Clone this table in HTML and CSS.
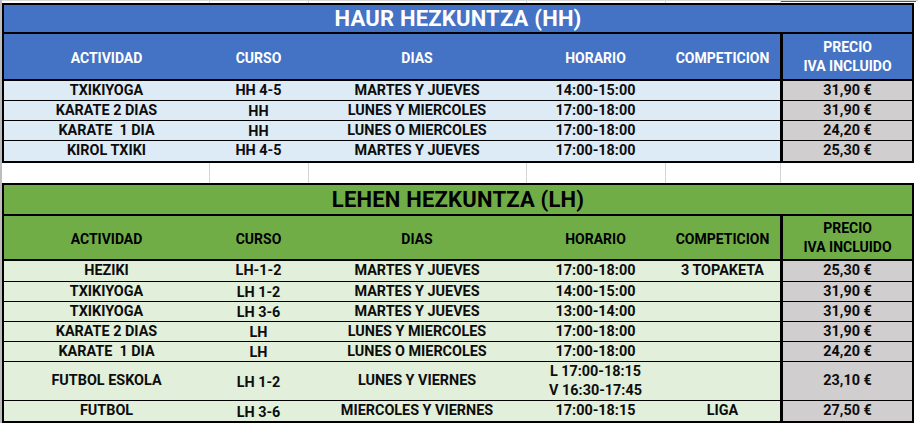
FILE: index.html
```html
<!DOCTYPE html>
<html lang="es">
<head>
<meta charset="utf-8">
<title>Actividades</title>
<link rel="stylesheet" href="styles.css">
</head>
<body>
<div class="sheet">
  <div class="grid-row strip">
    <span class="g1"></span><span class="g2"></span><span class="g3"></span><span class="g4"></span><span class="g5"></span><span class="g6 sel"></span>
  </div>
  <table class="tbl hh">
    <colgroup><col class="w1"><col class="w2"><col class="w3"><col class="w4"><col class="w5"><col class="w6"></colgroup>
    <tr class="title"><th colspan="6">HAUR HEZKUNTZA (HH)</th></tr>
    <tr class="head"><th>ACTIVIDAD</th><th>CURSO</th><th>DIAS</th><th>HORARIO</th><th>COMPETICION</th><th class="price">PRECIO<br>IVA INCLUIDO</th></tr>
    <tr><td>TXIKIYOGA</td><td>HH 4-5</td><td>MARTES Y JUEVES</td><td>14:00-15:00</td><td></td><td class="price">31,90 €</td></tr>
    <tr><td>KARATE 2 DIAS</td><td class="lo">HH</td><td>LUNES Y MIERCOLES</td><td>17:00-18:00</td><td></td><td class="price">31,90 €</td></tr>
    <tr><td>KARATE&nbsp; 1 DIA</td><td class="lo">HH</td><td>LUNES O MIERCOLES</td><td>17:00-18:00</td><td></td><td class="price">24,20 €</td></tr>
    <tr><td>KIROL TXIKI</td><td>HH 4-5</td><td>MARTES Y JUEVES</td><td>17:00-18:00</td><td></td><td class="price">25,30 €</td></tr>
  </table>
  <div class="grid-row gap">
    <span class="g1"></span><span class="g2"></span><span class="g3"></span><span class="g4"></span><span class="g5"></span><span class="g6"></span>
  </div>
  <table class="tbl lh">
    <colgroup><col class="w1"><col class="w2"><col class="w3"><col class="w4"><col class="w5"><col class="w6"></colgroup>
    <tr class="title"><th colspan="6">LEHEN HEZKUNTZA (LH)</th></tr>
    <tr class="head"><th>ACTIVIDAD</th><th>CURSO</th><th>DIAS</th><th>HORARIO</th><th>COMPETICION</th><th class="price">PRECIO<br>IVA INCLUIDO</th></tr>
    <tr class="first"><td>HEZIKI</td><td>LH-1-2</td><td>MARTES Y JUEVES</td><td>17:00-18:00</td><td>3 TOPAKETA</td><td class="price">25,30 €</td></tr>
    <tr><td>TXIKIYOGA</td><td class="lo">LH 1-2</td><td>MARTES Y JUEVES</td><td>14:00-15:00</td><td></td><td class="price">31,90 €</td></tr>
    <tr><td>TXIKIYOGA</td><td class="lo">LH 3-6</td><td>MARTES Y JUEVES</td><td>13:00-14:00</td><td></td><td class="price">31,90 €</td></tr>
    <tr><td>KARATE 2 DIAS</td><td class="lo">LH</td><td>LUNES Y MIERCOLES</td><td>17:00-18:00</td><td></td><td class="price">31,90 €</td></tr>
    <tr><td>KARATE&nbsp; 1 DIA</td><td class="lo">LH</td><td>LUNES O MIERCOLES</td><td>17:00-18:00</td><td></td><td class="price">24,20 €</td></tr>
    <tr class="tall"><td>FUTBOL ESKOLA</td><td class="lo">LH 1-2</td><td>LUNES Y VIERNES</td><td class="two">L 17:00-18:15<br>V 16:30-17:45</td><td></td><td class="price">23,10 €</td></tr>
    <tr><td>FUTBOL</td><td class="lo">LH 3-6</td><td>MIERCOLES Y VIERNES</td><td>17:00-18:15</td><td>LIGA</td><td class="price">27,50 €</td></tr>
  </table>
</div>
</body>
</html>
```

FILE: styles.css
```css
html, body {
  margin: 0;
  padding: 0;
  background: #ffffff;
}

body {
  font-family: Roboto, "Liberation Sans", Arial, sans-serif;
  color: #000;
}

.sheet {
  border-left: 2px solid #bdbdbd;
  width: 916px;
}

/* spreadsheet gridline rows (outside the tables) */
.grid-row {
  display: flex;
}

.grid-row span {
  box-sizing: border-box;
  border-right: 1px solid #d4d4d4;
  height: 100%;
}

.strip {
  height: 3px;
  border-top: 1px solid #d9d9d9;
  box-sizing: border-box;
}

.strip .sel {
  border-top: 1px solid #217346;
}

.gap {
  height: 20px;
}

.g1 { width: 208px; }
.g2 { width: 99px; }
.g3 { width: 218px; }
.g4 { width: 139px; }
.g5 { width: 115px; }
.g6 { width: 135px; border-right: none !important; }

/* tables */
.tbl {
  border-collapse: separate;
  border-spacing: 0;
  table-layout: fixed;
  width: 912px;
  border: 2px solid #000;
}

.w1 { width: 205px; }
.w2 { width: 99px; }
.w3 { width: 218px; }
.w4 { width: 139px; }
.w5 { width: 115px; }
.w6 { width: 132px; }

.tbl th,
.tbl td {
  padding: 0;
  text-align: center;
  vertical-align: middle;
  white-space: nowrap;
  font-weight: 700;
}

.title th {
  font-size: 22px;
  line-height: 24px;
  letter-spacing: 0.2px;
  border-bottom: 2px solid #000;
}

.hh .title { height: 29px; }
.lh .title { height: 31px; }

.head th {
  font-size: 14px;
  line-height: 19px;
  border-bottom: 2px solid #000;
  padding-top: 3px;
}

.head th.price {
  padding-top: 0;
}

.hh .head { height: 47px; }
.lh .head { height: 45px; }

.tbl td {
  font-size: 14.4px;
  line-height: 16px;
  height: 19px;
  border-bottom: 1px solid #000;
  color: #0d0d0d;
}

.tbl tr:last-child td {
  border-bottom: none;
  height: 20px;
}

.lh .first td { height: 20px; }
.lh .tall td { height: 37px; }

/* cells whose text sits a little lower in the sheet */
.tbl td.lo {
  padding-top: 3px;
  height: 16px;
}

.tbl tr:last-child td.lo {
  height: 17px;
}

.lh .tall td.lo {
  height: 34px;
}

.tbl td.two {
  line-height: 19px;
}

.tbl .price {
  border-left: 3px solid #000;
}

.tbl td.price {
  background: #d0cece;
}

/* HH colours */
.hh th {
  background: #4472c4;
  color: #ffffff;
}

.hh td {
  background: #ddebf7;
}

/* LH colours */
.lh th {
  background: #70ad47;
  color: #000000;
}

.lh td {
  background: #e2efda;
}
```
